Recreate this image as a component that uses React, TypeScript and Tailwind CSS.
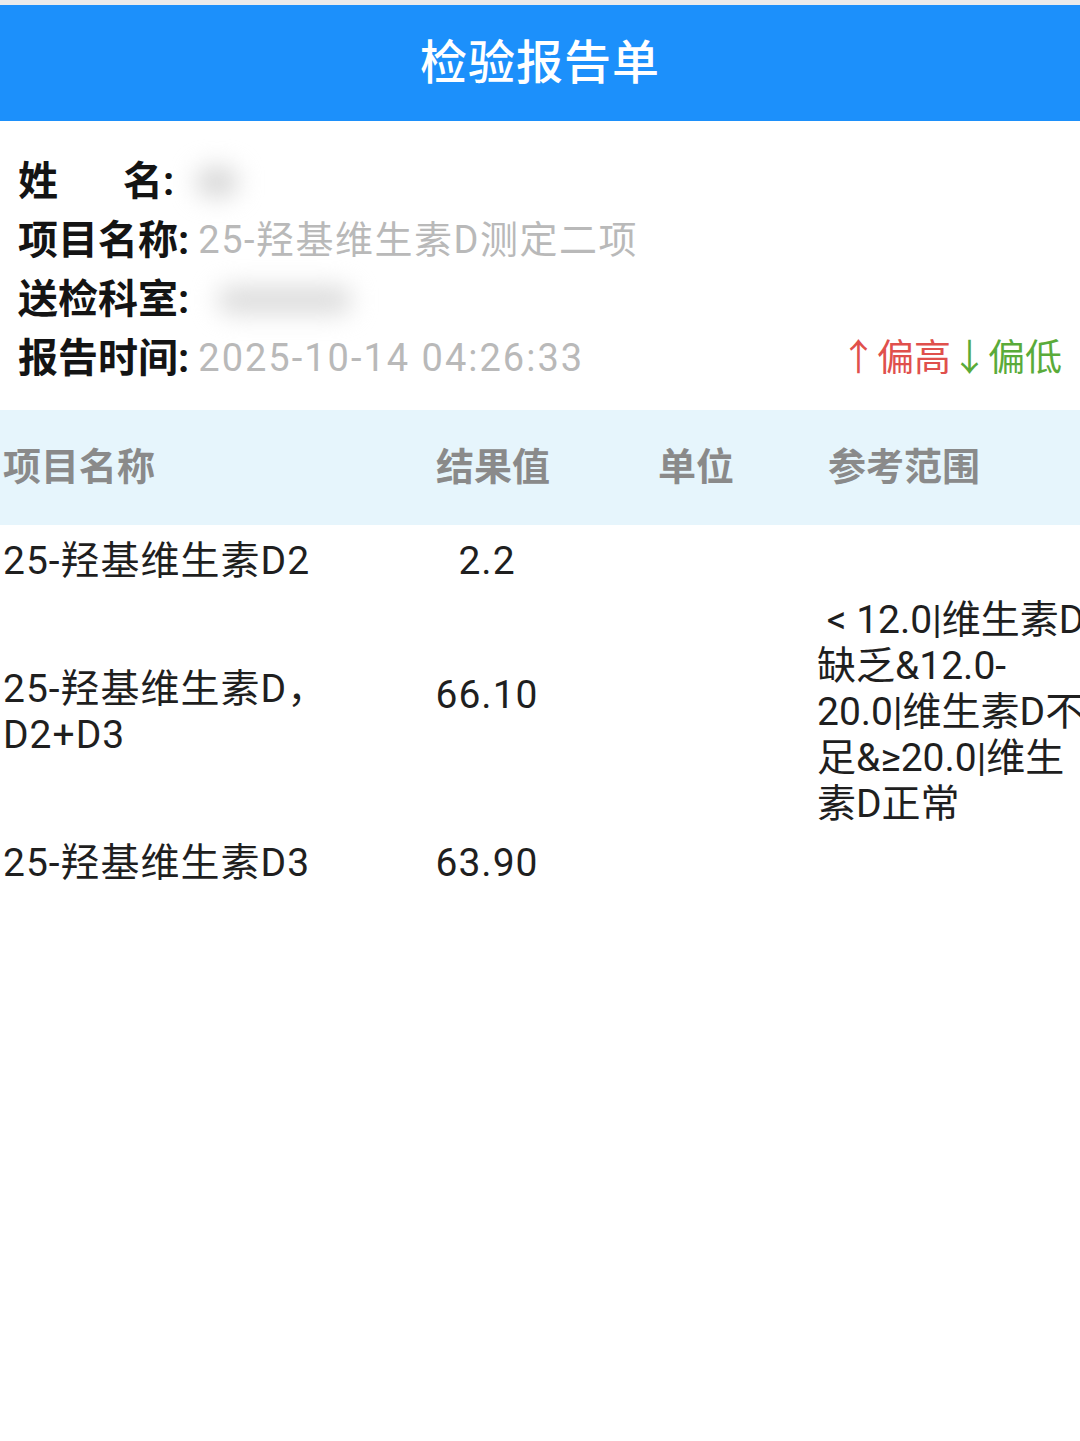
export default function App() {
  const font = "font-['Roboto','Noto_Sans_CJK_SC',sans-serif]"

  return (
    <div className={`min-h-[1441px] w-[1080px] overflow-hidden bg-white ${font}`}>
      {/* status strip + title bar */}
      <div className="h-[5px] bg-[#ebebeb]" />
      <div className="flex h-[116px] items-center justify-center bg-[#1c90fb]">
        <h1 className="text-[47px] font-medium tracking-[1px] text-white">检验报告单</h1>
      </div>

      {/* basic info */}
      <div className="pt-[31px] pl-[18px] pr-[18px]">
        <div className="flex h-[59px] items-center">
          <span className="text-[40px] font-bold text-[#141414]">
            <span className="inline-block w-[105px]">姓</span>名:
          </span>
          <span className="ml-[22px] inline-block h-[30px] w-[42px] rounded-full bg-[#d6d6d6] blur-md" />
        </div>
        <div className="flex h-[59px] items-center">
          <span className="text-[40px] font-bold text-[#141414]">项目名称:</span>
          <span className="ml-[9px] text-[38px] tracking-[1.5px] text-[#b9b9b9]">25-羟基维生素D测定二项</span>
        </div>
        <div className="flex h-[59px] items-center">
          <span className="text-[40px] font-bold text-[#141414]">送检科室:</span>
          <span className="ml-[28px] inline-block h-[28px] w-[135px] rounded-full bg-[#dcdcdc] blur-md" />
        </div>
        <div className="flex h-[59px] items-center justify-between">
          <div className="flex items-center">
            <span className="text-[40px] font-bold text-[#141414]">报告时间:</span>
            <span className="ml-[9px] text-[38px] tracking-[2px] text-[#b9b9b9]">2025-10-14 04:26:33</span>
          </div>
          <div className="text-[37px]">
            <span className="text-[#e0504c]">↑偏高</span>
            <span className="text-[#5aab3a]">↓偏低</span>
          </div>
        </div>
      </div>

      {/* result table */}
      <div className="mt-[22px]">
        <div className="flex h-[115px] items-center bg-[#e6f5fc] text-[38px] font-bold text-[#8a8a8a]">
          <div className="w-[433px] shrink-0 pl-[3px]">项目名称</div>
          <div className="w-[222px] shrink-0 pl-[3px]">结果值</div>
          <div className="w-[170px] shrink-0 pl-[3px]">单位</div>
          <div className="flex-1 pl-[3px] whitespace-nowrap">参考范围</div>
        </div>

        <div className="text-[39px] leading-[46px] tracking-[1px] text-[#1f1f1f]">
          <div className="flex items-center py-[13px]">
            <div className="w-[433px] shrink-0 pl-[3px]">25-羟基维生素D2</div>
            <div className="w-[222px] shrink-0">
              <div className="w-[108px] text-center">2.2</div>
            </div>
            <div className="w-[170px] shrink-0" />
            <div className="flex-1" />
          </div>

          <div className="flex items-center">
            <div className="w-[433px] shrink-0 pl-[3px]">
              25-羟基维生素D，
              <br />
              D2+D3
            </div>
            <div className="w-[222px] shrink-0 pb-[34px]">
              <div className="w-[108px] text-center">66.10</div>
            </div>
            <div className="w-[162px] shrink-0" />
            <div className="flex-1 whitespace-nowrap tracking-normal">
              <div>&nbsp;&lt; 12.0|维生素D</div>
              <div>缺乏&amp;12.0-</div>
              <div>20.0|维生素D不</div>
              <div>足&amp;≥20.0|维生</div>
              <div>素D正常</div>
            </div>
          </div>

          <div className="flex items-center py-[13px]">
            <div className="w-[433px] shrink-0 pl-[3px]">25-羟基维生素D3</div>
            <div className="w-[222px] shrink-0">
              <div className="w-[108px] text-center">63.90</div>
            </div>
            <div className="w-[170px] shrink-0" />
            <div className="flex-1" />
          </div>
        </div>
      </div>
    </div>
  )
}
